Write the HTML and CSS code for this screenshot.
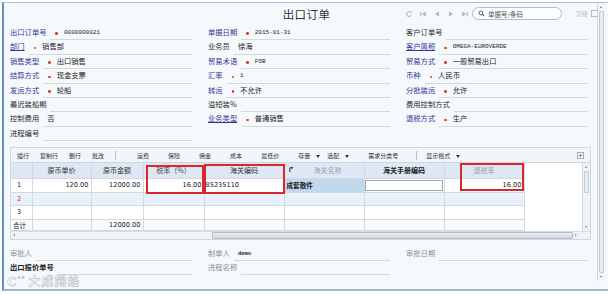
FILE: index.html
```html
<!DOCTYPE html>
<html lang="zh-CN">
<head>
    <meta charset="UTF-8">
    <meta name="viewport" content="width=device-width, initial-scale=1.0">
    <title>出口订单</title>
    <link rel="stylesheet" href="styles.css">
</head>
<body>
    <div class="window">
        <div class="content">
            <div class="titlebar">
                <span></span>
                <h1 class="title">出口订单</h1>
                <div class="tools">
                    <svg class="nav-icon" viewBox="0 0 10 10"><path d="M7.8 6.2A3 3 0 1 1 6.6 2.6" fill="none" stroke="#aeb8c3" stroke-width="1.4"/><path d="M5.2 1.2h3v3z" fill="#aeb8c3"/></svg>
                    <svg class="nav-icon" viewBox="0 0 10 10"><rect x="1.5" y="2" width="1.4" height="6" fill="#aeb8c3"/><path d="M8.5 2v6L3.5 5z" fill="#aeb8c3"/></svg>
                    <svg class="nav-icon" viewBox="0 0 10 10"><path d="M7.5 2v6L2.5 5z" fill="#aeb8c3"/></svg>
                    <svg class="nav-icon" viewBox="0 0 10 10"><path d="M2.5 2v6L7.5 5z" fill="#aeb8c3"/></svg>
                    <svg class="nav-icon" viewBox="0 0 10 10"><path d="M1.5 2v6L6.5 5z" fill="#aeb8c3"/><rect x="7.1" y="2" width="1.4" height="6" fill="#aeb8c3"/></svg>
                    <div class="search">
                        <svg class="search-icon" viewBox="0 0 10 10"><circle cx="4.2" cy="4.2" r="2.8" fill="none" stroke="#3d5570" stroke-width="1.3"/><path d="M6.2 6.2l2.6 2.6" stroke="#3d5570" stroke-width="1.5"/></svg>
                        <span>单据号/条码</span>
                    </div>
                    <span class="advanced">高级</span>
                    <span class="win-box"></span>
                </div>
            </div>

            <div class="form">
                <div class="col">
                    <div class="field"><span class="label req">出口订单号</span><span class="input"><i class="dot"></i><span class="code">0000000021</span></span></div>
                    <div class="field"><span class="label req link">部门</span><span class="input"><i class="dot"></i>销售部</span></div>
                    <div class="field"><span class="label req">销售类型</span><span class="input"><i class="dot"></i>出口销售</span></div>
                    <div class="field"><span class="label req">结算方式</span><span class="input"><i class="dot"></i>现金支票</span></div>
                    <div class="field"><span class="label req">发运方式</span><span class="input"><i class="dot"></i>轮船</span></div>
                    <div class="field"><span class="label">最迟装船期</span><span class="input"></span></div>
                    <div class="field"><span class="label">控制费用</span><span class="input">否</span></div>
                    <div class="field"><span class="label">进程编号</span><span class="input"></span></div>
                </div>
                <div class="col">
                    <div class="field"><span class="label req">单据日期</span><span class="input"><i class="dot"></i><span class="code">2015-01-31</span></span></div>
                    <div class="field"><span class="label">业务员</span><span class="input">徐海</span></div>
                    <div class="field"><span class="label req">贸易术语</span><span class="input"><i class="dot"></i><span class="code">FOB</span></span></div>
                    <div class="field"><span class="label req">汇率</span><span class="input"><i class="dot"></i><span class="code">1</span></span></div>
                    <div class="field"><span class="label req">转运</span><span class="input"><i class="dot"></i>不允许</span></div>
                    <div class="field"><span class="label">溢短装%</span><span class="input"></span></div>
                    <div class="field"><span class="label req link">业务类型</span><span class="input"><i class="dot"></i>普通销售</span></div>
                </div>
                <div class="col">
                    <div class="field"><span class="label">客户订单号</span><span class="input"></span></div>
                    <div class="field"><span class="label req link">客户简称</span><span class="input"><i class="dot"></i><span class="code">OMEGA-EUROVERDE</span></span></div>
                    <div class="field"><span class="label req">贸易方式</span><span class="input"><i class="dot"></i>一般贸易出口</span></div>
                    <div class="field"><span class="label req">币种</span><span class="input"><i class="dot"></i>人民币</span></div>
                    <div class="field"><span class="label req">分批装运</span><span class="input"><i class="dot"></i>允许</span></div>
                    <div class="field"><span class="label">费用控制方式</span><span class="input"></span></div>
                    <div class="field"><span class="label req">退税方式</span><span class="input"><i class="dot"></i>生产</span></div>
                </div>
            </div>

            <div class="grid-panel">
                <div class="grid-toolbar">
                    <div class="tb-group first">
                        <span>插行</span><span>复制行</span><span>删行</span><span>批改</span>
                    </div>
                    <span class="tb-sep"></span>
                    <div class="tb-group">
                        <span>运费</span><span>保险</span><span>佣金</span><span>成本</span><span>最低价</span>
                        <div class="tb-pair"><span class="drop">存量</span><span class="drop">选配</span></div>
                        <span>需求分类号</span>
                    </div>
                    <span class="tb-sep second"></span>
                    <span class="drop">显示格式</span>
                    <svg class="tb-icon" viewBox="0 0 8 8"><rect x="0.5" y="0.5" width="7" height="7" fill="#f4f6f8" stroke="#9aa3ad"/><path d="M2 4h4M4 2v4" stroke="#7d8792"/></svg>
                </div>

                <div class="grid-body">
                    <table class="grid">
                        <colgroup>
                            <col class="c-no"><col class="c-80"><col class="c-52"><col class="c-61">
                            <col class="c-80"><col class="c-80"><col class="c-80"><col class="c-80">
                        </colgroup>
                        <tr class="head">
                            <th></th>
                            <th>原币单价</th>
                            <th>原币金额</th>
                            <th class="dim">税率（%）</th>
                            <th>海关编码</th>
                            <th class="muted"><svg class="pin" viewBox="0 0 6 8"><path d="M1 7V2h3" fill="none" stroke="#333" stroke-width="1.2"/><path d="M3 0.5l2.5 1.5L3 3.5z" fill="#333"/></svg>海关名称</th>
                            <th class="strong">海关手册编码</th>
                            <th class="muted">退税率</th>
                        </tr>
                        <tr>
                            <td class="no">1</td>
                            <td class="num">120.00</td>
                            <td class="num">12000.00</td>
                            <td class="num">16.00</td>
                            <td class="code-cell">85235110</td>
                            <td class="selected">成套散件</td>
                            <td class="editing"><span class="edit-box"></span></td>
                            <td class="num">16.00</td>
                        </tr>
                        <tr class="alt">
                            <td class="no red">2</td>
                            <td></td><td></td><td></td><td></td><td></td><td></td><td></td>
                        </tr>
                        <tr>
                            <td class="no">3</td>
                            <td></td><td></td><td></td><td></td><td></td><td></td><td></td>
                        </tr>
                        <tr class="total">
                            <td class="no">合计</td>
                            <td></td>
                            <td class="num">12000.00</td>
                            <td></td><td></td><td></td><td></td><td></td>
                        </tr>
                    </table>
                    <div class="grid-fill"></div>
                    <div class="vscroll grid-vscroll">
                        <span class="arrow up"></span>
                        <span class="thumb short"></span>
                        <span class="track"></span>
                        <span class="arrow down"></span>
                    </div>

                    <div class="mark m1"></div>
                    <div class="mark m2"></div>
                    <div class="mark m3"></div>
                </div>

                <div class="hscroll">
                    <span class="arrow left"></span>
                    <div class="h-track"><span class="h-thumb"></span></div>
                    <span class="arrow right"></span>
                    <span class="corner"></span>
                </div>
            </div>

            <div class="form footer">
                <div class="col">
                    <div class="field"><span class="label grey">审批人</span><span class="input"></span></div>
                    <div class="field"><span class="label bold">出口报价单号</span><span class="input"></span></div>
                </div>
                <div class="col">
                    <div class="field"><span class="label grey">制单人</span><span class="input"><span class="code demo">demo</span></span></div>
                    <div class="field"><span class="label grey">进程名称</span><span class="input"></span></div>
                </div>
                <div class="col">
                    <div class="field"><span class="label grey">审批日期</span><span class="input"></span></div>
                </div>
            </div>
        </div>

        <div class="vscroll page-scroll">
            <span class="arrow up"></span>
            <span class="thumb"></span>
            <span class="arrow down"></span>
        </div>

        <div class="watermark"><span class="logo">C<sup>°°</sup></span>大成网络</div>
    </div>
</body>
</html>
```

FILE: styles.css
```css
* {
    box-sizing: border-box;
}

body {
    margin: 0;
    background: #fff;
    font-family: "Noto Sans CJK SC", "DejaVu Sans", sans-serif;
    color: #222;
}

.window {
    position: relative;
    display: flex;
    width: 606px;
    height: 289px;
    margin: 2px 2px 0 2px;
    padding-right: 3px;
    background: #f6f9fc;
    border-left: 2px solid #5f8fc8;
    border-top: 1px solid #a9c1da;
    border-bottom: 2px solid #a3b5c7;
}

.content {
    flex: 1;
    min-width: 0;
}

/* title + record navigation */
.titlebar {
    display: grid;
    grid-template-columns: 1fr auto 1fr;
    align-items: center;
    height: 21px;
}

.title {
    margin: 0;
    padding-left: 12px;
    font-size: 11.5px;
    font-weight: normal;
    letter-spacing: 0.4px;
    color: #333;
}

.tools {
    justify-self: end;
    display: flex;
    align-items: center;
}

.nav-icon {
    width: 8px;
    height: 8px;
    margin-right: 6px;
}

.nav-icon:nth-child(5) {
    margin-right: 3px;
}

.search {
    display: flex;
    align-items: center;
    width: 90px;
    height: 13px;
    padding-left: 5px;
    border: 1px solid #b3bcc6;
    border-radius: 7px;
    background: #fdfeff;
    font-size: 6.5px;
    color: #555;
}

.search-icon {
    width: 7px;
    height: 7px;
    margin-right: 3px;
}

.advanced {
    margin-left: 14px;
    font-size: 6px;
    color: #b8c1ca;
}

.win-box {
    width: 6px;
    height: 7px;
    margin-left: 3px;
    border: 1px solid #b5bec8;
    border-right: none;
}

/* header form */
.form {
    display: flex;
    margin: 2px 6px 0 6px;
    font-size: 7.3px;
}

.col {
    display: flex;
    flex-direction: column;
    width: 182px;
}

.col + .col {
    margin-left: 16px;
}

.field {
    display: flex;
    height: 14.4px;
}

.label {
    white-space: nowrap;
    line-height: 13.4px;
    color: #2c2c2c;
}

.label.req {
    color: #34349a;
}

.label.link {
    text-decoration: underline;
}

.label.grey {
    color: #8a8f95;
}

.label.bold {
    font-weight: bold;
    color: #1e1e1e;
}

.input {
    flex: 1;
    display: flex;
    align-items: center;
    margin-left: 4px;
    padding-left: 4px;
    line-height: 13.4px;
    border-bottom: 1px solid #d3d9df;
    white-space: nowrap;
    color: #222;
}

.dot {
    width: 2.5px;
    height: 2.5px;
    margin: 2px 6px 0 1px;
    border-radius: 50%;
    background: #e03b3b;
}

.code {
    font-family: "Liberation Mono", monospace;
    font-size: 6px;
}

.code.demo {
    font-weight: bold;
    font-size: 5.5px;
}

/* detail grid */
.grid-panel {
    margin: 6px 6px 0 6px;
    border: 1px solid #cfd7df;
    background: #fff;
}

.grid-toolbar {
    display: flex;
    align-items: center;
    height: 14px;
    padding-left: 6px;
    background: #f3f6f9;
    font-size: 6px;
    color: #333;
}

.tb-group {
    display: flex;
    align-items: center;
    gap: 19px;
}

.tb-group.first {
    gap: 11px;
}

.tb-pair {
    display: flex;
    gap: 7px;
}

.tb-sep {
    width: 1px;
    height: 9px;
    margin: 0 21px 0 11px;
    background: #b9c1c9;
}

.tb-sep.second {
    margin: 0 9px 0 18px;
}

.drop::after {
    content: "";
    display: inline-block;
    margin-left: 6px;
    vertical-align: middle;
    border-left: 2px solid transparent;
    border-right: 2px solid transparent;
    border-top: 3px solid #333;
}

.tb-icon {
    width: 7px;
    height: 7px;
    margin-left: auto;
    margin-right: 6px;
}

.grid-body {
    position: relative;
    display: flex;
    border-top: 1px solid #cfd7df;
}

.grid {
    width: 513px;
    border-collapse: collapse;
    table-layout: fixed;
    border-right: 1px solid #8e959c;
    border-bottom: 1px solid #8e959c;
    font-size: 6.6px;
}

.c-no { width: 21px; }
.c-80 { width: 59px; }
.c-52 { width: 52px; }
.c-61 { width: 61px; }
col.c-80:nth-child(n+5) { width: 80px; }

.grid th,
.grid td {
    padding: 0 2px;
    border: 1px solid #d3d9df;
    border-top: none;
    border-left: none;
    white-space: nowrap;
    overflow: hidden;
}

.grid th {
    height: 15px;
    font-size: 7px;
    font-weight: normal;
    color: #333;
    background: #dde8f4;
}

.grid th.dim {
    color: #4a4a4a;
}

.grid th.muted {
    color: #9ba3ab;
}

.grid th.strong {
    font-weight: bold;
    color: #222;
}

.pin {
    float: left;
    width: 5px;
    height: 7px;
    margin: 1px 0 0 2px;
}

.grid td {
    height: 13.5px;
    font-family: "DejaVu Sans", sans-serif;
    background: #fff;
}

.grid tr.alt td {
    background: #e8f1fb;
}

.grid tr.total td {
    height: 11.5px;
    background: #f9fbfd;
}

.grid td.no {
    padding-left: 6px;
    font-size: 6.6px;
    color: #222;
}

.grid tr.total td.no {
    padding-left: 2px;
    font-family: "Noto Sans CJK SC", sans-serif;
}

.grid td.red {
    color: #d43030;
}

.grid td.num {
    text-align: right;
}

.grid td.code-cell {
    padding-left: 1px;
}

.grid td.selected {
    padding-left: 2px;
    background: #c1d8ef;
    font-family: "Noto Sans CJK SC", sans-serif;
    font-weight: bold;
    font-size: 6.6px;
}

.grid td.editing {
    padding: 1px 1px 1px 0;
}

.edit-box {
    display: block;
    height: 11px;
    border: 1px solid #9ea6ae;
    background: #fff;
}

.grid-fill {
    flex: 1;
    background: #fff;
}

.mark {
    position: absolute;
    border: 2px solid #d9282d;
}

.m1 { left: 135px; top: 2px; width: 58px; height: 29px; }
.m2 { left: 193px; top: 1px; width: 81px; height: 30px; }
.m3 { left: 449px; top: 0; width: 64px; height: 28px; }

/* scrollbars */
.vscroll {
    display: flex;
    flex-direction: column;
    width: 8px;
    background: #f0f3f6;
    border-left: 1px solid #d0d7de;
}

.grid-vscroll .track {
    flex: 1;
}

.thumb {
    flex: 1;
    margin: 0 1px;
    background: #e9edf1;
    border: 1px solid #c3cbd3;
    border-radius: 1px;
}

.thumb.short {
    flex: none;
    height: 22px;
}

.arrow {
    position: relative;
    height: 8px;
    flex: none;
}

.arrow::after {
    content: "";
    position: absolute;
    left: 2px;
    top: 3px;
    border: 1.5px solid transparent;
}

.arrow.up::after { border-bottom: 2px solid #6d7782; top: 2px; }
.arrow.down::after { border-top: 2px solid #6d7782; }
.arrow.left::after { border-right: 2px solid #6d7782; left: 1px; top: 2px; }
.arrow.right::after { border-left: 2px solid #6d7782; top: 2px; }

.page-scroll {
    height: 278px;
    background: #f3f5f8;
}

.hscroll {
    display: flex;
    height: 8px;
    background: #f0f3f6;
    border-top: 1px solid #d6dce2;
}

.hscroll .arrow {
    width: 8px;
    height: 8px;
}

.h-track {
    flex: 1;
    display: flex;
}

.h-thumb {
    flex: 1;
    margin-left: 193px;
    background: linear-gradient(#e9ecef, #d5d9dd);
    border: 1px solid #b6bcc2;
    border-radius: 1px;
}

.corner {
    width: 9px;
}

/* bottom audit fields */
.footer {
    margin-top: 6.5px;
}

.watermark {
    position: absolute;
    left: 3px;
    bottom: 0;
    font-size: 12px;
    font-weight: bold;
    letter-spacing: 1px;
    color: transparent;
    -webkit-text-stroke: 0.5px #b0b8c1;
}

.watermark .logo {
    font-family: "DejaVu Sans", sans-serif;
    font-size: 13px;
    margin-right: 3px;
}

.watermark sup {
    font-size: 6px;
}
```
